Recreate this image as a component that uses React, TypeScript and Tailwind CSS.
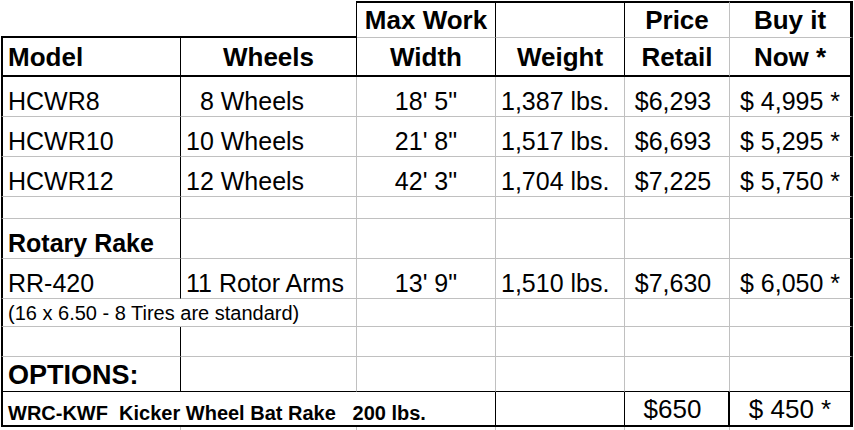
import type React from "react"

type CellProps = { c: string; children?: React.ReactNode }

function Cell({ c, children }: CellProps) {
  return <div className={`flex items-end whitespace-pre leading-[1.15] ${c}`}>{children}</div>
}

const rows = [
  ["HCWR8", "  8 Wheels", "18' 5\"", "1,387 lbs.", "$6,293", "$ 4,995 *"],
  ["HCWR10", "10 Wheels", "21' 8\"", "1,517 lbs.", "$6,693", "$ 5,295 *"],
  ["HCWR12", "12 Wheels", "42' 3\"", "1,704 lbs.", "$7,225", "$ 5,750 *"],
]

const first = "border-l-2 border-r border-b border-b-[#c0c0c0] pl-[5px]"
const mid = "border-r border-b border-[#c0c0c0]"
const last = "border-r-[3px] border-b border-b-[#c0c0c0] justify-center"

function BodyRow({ r, firstBold }: { r: string[]; firstBold?: boolean }) {
  return (
    <>
      <Cell c={`${first} ${firstBold ? "font-bold" : ""}`}>{r[0]}</Cell>
      <Cell c={`${mid} pl-[5px]`}>{r[1]}</Cell>
      <Cell c={`${mid} justify-center`}>{r[2]}</Cell>
      <Cell c={`${mid} pl-[5px]`}>{r[3]}</Cell>
      <Cell c={`${mid} justify-center pr-[8px]`}>{r[4]}</Cell>
      <Cell c={last}>{r[5]}</Cell>
    </>
  )
}

export default function App() {
  return (
    <div className="min-h-screen bg-white pt-[1px] pl-[1px] font-['Liberation_Sans',Arial,sans-serif] text-[25px] text-black">
      <div className="grid w-[852px] grid-cols-[180px_176px_139px_129px_105px_123px] grid-rows-[37px_39px_40px_40px_40px_22px_40px_40px_28px_30px_35px_35px_3px]">
        {/* header line 1 */}
        <Cell c="border-b-2" />
        <Cell c="border-b-2 border-r" />
        <Cell c="border-t-2 border-r border-b border-b-[#c0c0c0] justify-center pb-[1px] text-[26px] font-bold">Max Work</Cell>
        <Cell c="border-t-2 border-r border-b border-b-[#c0c0c0]" />
        <Cell c="border-t-2 border-r border-b border-[#c0c0c0] border-t-black justify-center pb-[1px] text-[26px] font-bold">Price</Cell>
        <Cell c="border-t-2 border-r-[3px] border-b border-b-[#c0c0c0] justify-center pb-[1px] text-[26px] font-bold">Buy it</Cell>

        {/* header line 2 */}
        <Cell c="border-l-2 border-r border-b-2 pl-[5px] pb-[2px] text-[26px] font-bold">Model</Cell>
        <Cell c="border-r border-b-2 justify-center pb-[2px] text-[26px] font-bold">Wheels</Cell>
        <Cell c="border-r border-b-2 justify-center pb-[2px] text-[26px] font-bold">Width</Cell>
        <Cell c="border-r border-b-2 justify-center pb-[2px] text-[26px] font-bold">Weight</Cell>
        <Cell c="border-r border-r-[#c0c0c0] border-b-2 justify-center pb-[2px] text-[26px] font-bold">Retail</Cell>
        <Cell c="border-r-[3px] border-b-2 justify-center pb-[2px] text-[26px] font-bold">Now *</Cell>

        {rows.map((r) => (
          <BodyRow key={r[0]} r={r} />
        ))}
        <BodyRow r={["", "", "", "", "", ""]} />
        <BodyRow r={["Rotary Rake", "", "", "", "", ""]} firstBold />
        <BodyRow r={["RR-420", "11 Rotor Arms", "13' 9\"", "1,510 lbs.", "$7,630", "$ 6,050 *"]} />

        {/* tire note spills over the second column */}
        <Cell c="col-span-2 border-l-2 border-r border-b border-r-[#c0c0c0] border-b-[#c0c0c0] pl-[5px] pb-[1px] text-[20px]">
          (16 x 6.50 - 8 Tires are standard)
        </Cell>
        <Cell c={mid} />
        <Cell c={mid} />
        <Cell c={mid} />
        <Cell c={last} />

        <BodyRow r={["", "", "", "", "", ""]} />

        {/* options */}
        <Cell c="border-l-2 border-r border-b pl-[5px] text-[27px] font-bold">OPTIONS:</Cell>
        <Cell c="border-r border-r-[#c0c0c0] border-b" />
        <Cell c="border-r border-r-[#c0c0c0] border-b" />
        <Cell c="border-r border-r-[#c0c0c0] border-b" />
        <Cell c="border-r border-r-[#c0c0c0] border-b" />
        <Cell c="border-r-[3px] border-b" />

        <Cell c="col-span-3 border-l-2 border-r border-b-2 pl-[5px] text-[20px] font-bold">
          {"WRC-KWF  Kicker Wheel Bat Rake   200 lbs."}
        </Cell>
        <Cell c="border-r border-b-2" />
        <Cell c="border-r-2 border-b-2 justify-center pr-[8px] text-[26px]">$650</Cell>
        <Cell c="border-r-[3px] border-b-2 justify-center text-[26px]">$ 450 *</Cell>

        {/* gridline stubs under the table */}
        <Cell c="border-r border-r-[#c0c0c0]" />
        <Cell c="border-r border-r-[#c0c0c0]" />
        <Cell c="border-r border-r-[#c0c0c0]" />
        <Cell c="border-r border-r-[#c0c0c0]" />
        <Cell c="border-r border-r-[#c0c0c0]" />
        <Cell c="" />
      </div>
    </div>
  )
}
